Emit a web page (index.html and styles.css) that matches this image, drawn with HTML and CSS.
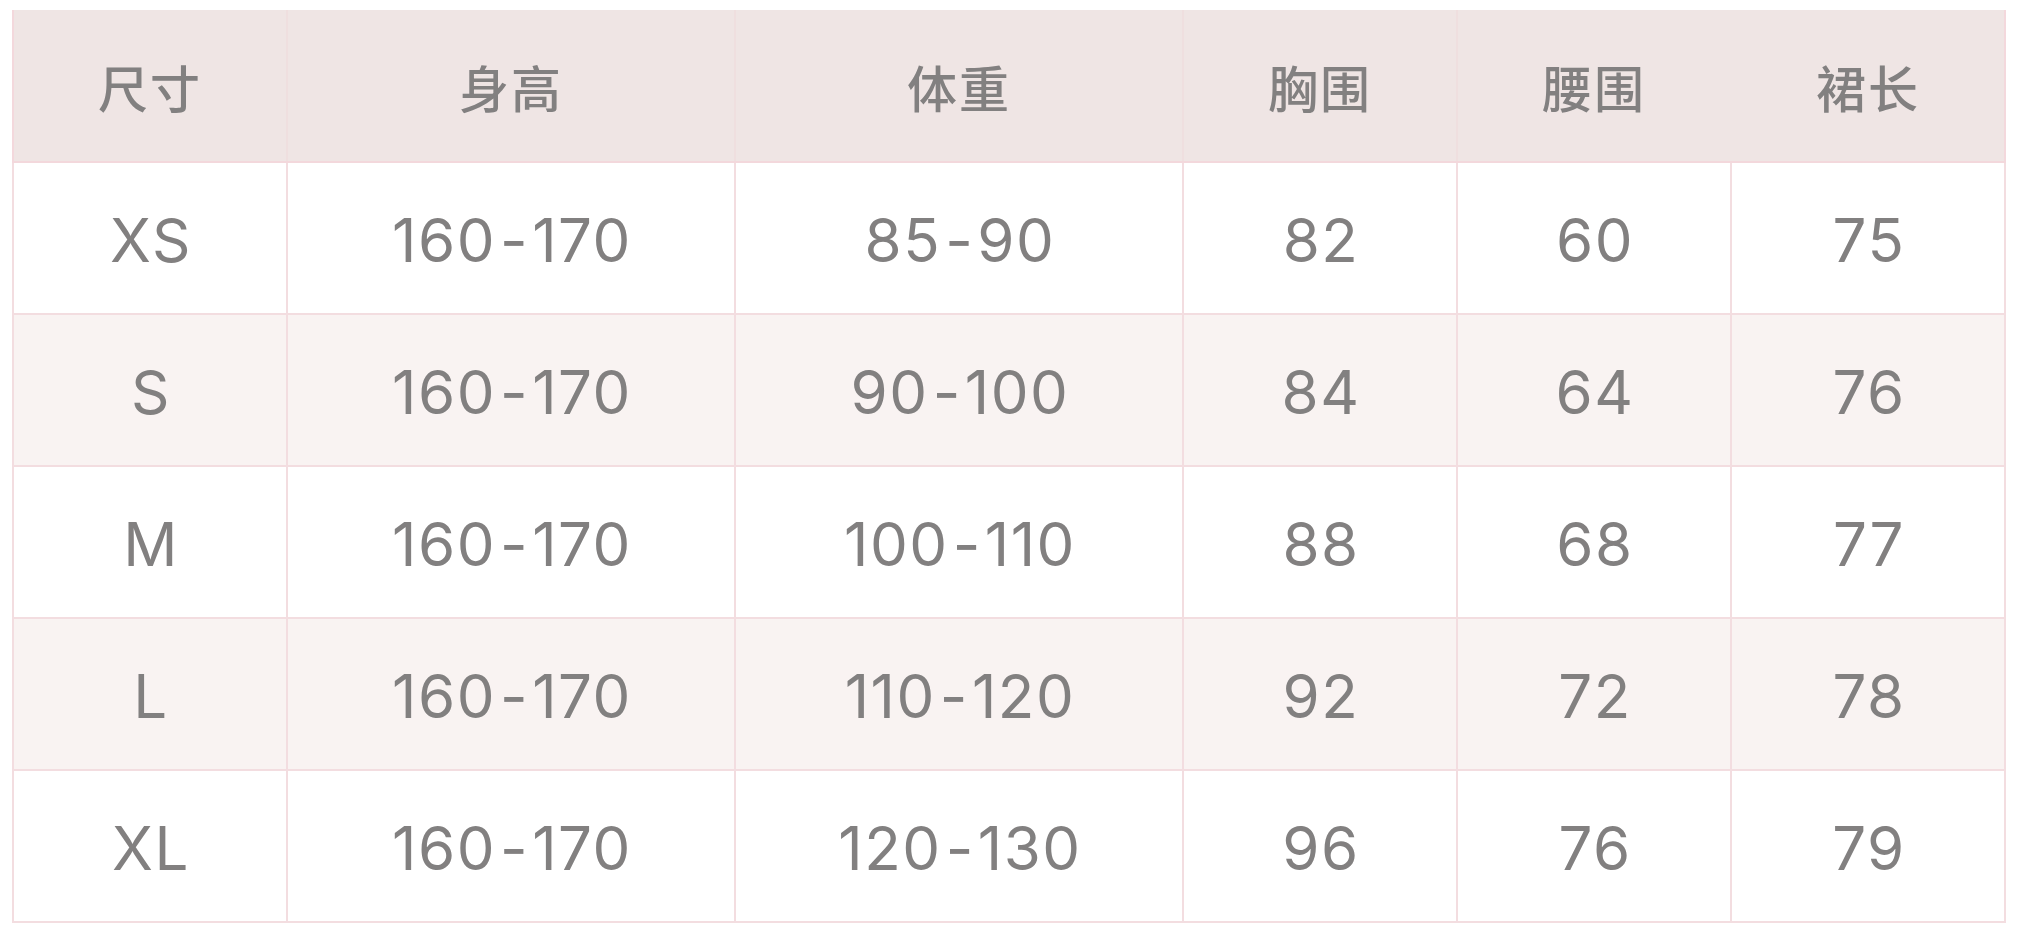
FILE: index.html
```html
<!DOCTYPE html>
<html lang="zh">
<head>
<meta charset="utf-8">
<title>尺码表</title>
<link rel="stylesheet" href="styles.css">
</head>
<body>
<table class="size-table">
  <colgroup>
    <col class="c-size">
    <col class="c-wide">
    <col class="c-wide">
    <col class="c-narrow">
    <col class="c-narrow">
    <col class="c-narrow">
  </colgroup>
  <thead>
    <tr>
      <th>尺寸</th><th>身高</th><th>体重</th><th>胸围</th><th class="no-div">腰围</th><th>裙长</th>
    </tr>
  </thead>
  <tbody>
    <tr><td>XS</td><td>160<span class="dash">-</span>170</td><td>85<span class="dash">-</span>90</td><td>82</td><td>60</td><td>75</td></tr>
    <tr class="alt"><td>S</td><td>160<span class="dash">-</span>170</td><td>90<span class="dash">-</span>100</td><td>84</td><td>64</td><td>76</td></tr>
    <tr><td>M</td><td>160<span class="dash">-</span>170</td><td>100<span class="dash">-</span>110</td><td>88</td><td>68</td><td>77</td></tr>
    <tr class="alt"><td>L</td><td>160<span class="dash">-</span>170</td><td>110<span class="dash">-</span>120</td><td>92</td><td>72</td><td>78</td></tr>
    <tr><td>XL</td><td>160<span class="dash">-</span>170</td><td>120<span class="dash">-</span>130</td><td>96</td><td>76</td><td>79</td></tr>
  </tbody>
</table>
</body>
</html>
```

FILE: styles.css
```css
html, body {
  margin: 0;
  background: #ffffff;
}
body {
  padding: 10px 12px 0 12px;
  font-family: "Inter", "Noto Sans CJK SC", sans-serif;
  color: #828080;
}
.size-table {
  width: 1994px;
  border-collapse: collapse;
  table-layout: fixed;
}
.c-size { width: 274px; }
.c-wide { width: 448px; }
.c-narrow { width: 274px; }

.size-table th,
.size-table td {
  text-align: center;
  vertical-align: middle;
  padding: 0;
  font-weight: 400;
  box-sizing: border-box;
}
.size-table th {
  height: 152px;
  background: #efe5e4;
  font-family: "Noto Sans CJK SC", sans-serif;
  font-weight: 500;
  font-size: 50px;
  letter-spacing: 2px;
  border: 2px solid #efdfdf;
  border-top: 0;
  border-bottom: 2px solid #f3d8dc;
}
.size-table th:first-child { border-left: 2px solid #f3d8dc; }
.size-table th:last-child { border-right: 2px solid #f3d8dc; }
.size-table th.no-div { border-right-color: #efe5e4; }

.size-table td {
  height: 152px;
  padding-top: 4px;
  padding-left: 2px;
  font-size: 60px;
  letter-spacing: 1.5px;
  border: 2px solid #f3dde0;
  background: #ffffff;
}
.size-table tr.alt td {
  background: #f9f3f2;
}
.dash {
  margin: 0 3px 0 4px;
}
```
